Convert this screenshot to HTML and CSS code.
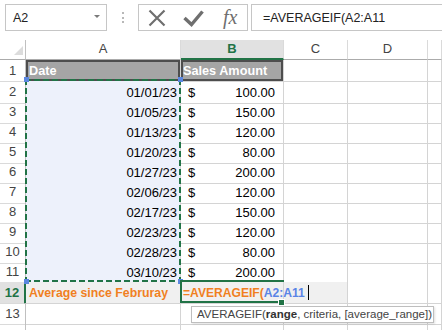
FILE: index.html
```html
<!DOCTYPE html>
<html lang="en">
<head>
    <meta charset="UTF-8">
    <title>AVERAGEIF</title>
    <link rel="stylesheet" href="styles.css">
</head>
<body>
    <div class="toolbar">
        <div class="name-box">
            <span>A2</span>
            <svg class="dropdown" width="6" height="4" viewBox="0 0 6 4"><polygon points="0,0 6,0 3,3" fill="#7a7a7a"/></svg>
        </div>
        <svg class="grip" width="3" height="12" viewBox="0 0 3 12">
            <rect x="0" y="0" width="2" height="2" fill="#b8b8b8"/>
            <rect x="0" y="5" width="2" height="2" fill="#b8b8b8"/>
            <rect x="0" y="9" width="2" height="2" fill="#b8b8b8"/>
        </svg>
        <div class="fx-buttons">
            <svg class="btn-cancel" width="18" height="25" viewBox="0 0 18 25">
                <path d="M1.5 5.5 L16.5 20.5 M16.5 5.5 L1.5 20.5" stroke="#6f6f6f" stroke-width="2.2" fill="none"/>
            </svg>
            <svg class="btn-enter" width="21" height="25" viewBox="0 0 21 25">
                <path d="M1.5 13 L8.5 19.5 L19.5 6.5" stroke="#6f6f6f" stroke-width="3.4" fill="none"/>
            </svg>
            <span class="fx">fx</span>
        </div>
        <div class="formula-bar">=AVERAGEIF(A2:A11</div>
    </div>

    <div class="sheet">
        <div class="row col-heads">
            <div class="corner"><svg width="9" height="9" viewBox="0 0 9 9"><polygon points="9,0 9,9 0,9" fill="#dcdcdc"/></svg></div>
            <div class="col-head">A</div>
            <div class="col-head active">B</div>
            <div class="col-head">C</div>
            <div class="col-head">D</div>
            <div class="col-head"></div>
        </div>
        <div class="row r1">
            <div class="row-head">1</div>
            <div class="cell title">Date</div>
            <div class="cell title">Sales Amount</div>
            <div class="cell"></div><div class="cell"></div><div class="cell"></div>
        </div>
        <div class="row">
            <div class="row-head">2</div>
            <div class="cell date">01/01/23</div>
            <div class="cell money"><span>$</span><span>100.00</span></div>
            <div class="cell"></div><div class="cell"></div><div class="cell"></div>
        </div>
        <div class="row">
            <div class="row-head">3</div>
            <div class="cell date">01/05/23</div>
            <div class="cell money"><span>$</span><span>150.00</span></div>
            <div class="cell"></div><div class="cell"></div><div class="cell"></div>
        </div>
        <div class="row">
            <div class="row-head">4</div>
            <div class="cell date">01/13/23</div>
            <div class="cell money"><span>$</span><span>120.00</span></div>
            <div class="cell"></div><div class="cell"></div><div class="cell"></div>
        </div>
        <div class="row">
            <div class="row-head">5</div>
            <div class="cell date">01/20/23</div>
            <div class="cell money"><span>$</span><span>80.00</span></div>
            <div class="cell"></div><div class="cell"></div><div class="cell"></div>
        </div>
        <div class="row">
            <div class="row-head">6</div>
            <div class="cell date">01/27/23</div>
            <div class="cell money"><span>$</span><span>200.00</span></div>
            <div class="cell"></div><div class="cell"></div><div class="cell"></div>
        </div>
        <div class="row">
            <div class="row-head">7</div>
            <div class="cell date">02/06/23</div>
            <div class="cell money"><span>$</span><span>120.00</span></div>
            <div class="cell"></div><div class="cell"></div><div class="cell"></div>
        </div>
        <div class="row">
            <div class="row-head">8</div>
            <div class="cell date">02/17/23</div>
            <div class="cell money"><span>$</span><span>150.00</span></div>
            <div class="cell"></div><div class="cell"></div><div class="cell"></div>
        </div>
        <div class="row">
            <div class="row-head">9</div>
            <div class="cell date">02/23/23</div>
            <div class="cell money"><span>$</span><span>120.00</span></div>
            <div class="cell"></div><div class="cell"></div><div class="cell"></div>
        </div>
        <div class="row">
            <div class="row-head">10</div>
            <div class="cell date">02/28/23</div>
            <div class="cell money"><span>$</span><span>80.00</span></div>
            <div class="cell"></div><div class="cell"></div><div class="cell"></div>
        </div>
        <div class="row r11">
            <div class="row-head">11</div>
            <div class="cell date">03/10/23</div>
            <div class="cell money"><span>$</span><span>200.00</span></div>
            <div class="cell"></div><div class="cell"></div><div class="cell"></div>
        </div>
        <div class="row r12">
            <div class="row-head active">12</div>
            <div class="cell label">Average since Februray</div>
            <div class="cell editing"><span class="fn">=AVERAGEIF(</span><span class="ref">A2:A11</span><span class="caret"></span></div>
            <div class="cell"></div><div class="cell blank"></div><div class="cell blank"></div>
        </div>
        <div class="row r13">
            <div class="row-head">13</div>
            <div class="cell"></div><div class="cell"></div><div class="cell"></div><div class="cell"></div><div class="cell"></div>
        </div>
        <div class="row">
            <div class="row-head">14</div>
            <div class="cell"></div><div class="cell"></div><div class="cell"></div><div class="cell"></div><div class="cell"></div>
        </div>

        <!-- reference range + active cell overlays -->
        <div class="range"></div>
        <div class="handle h-tl"></div>
        <div class="handle h-tr"></div>
        <div class="handle h-bl"></div>
        <div class="handle h-br"></div>
        <div class="active-cell"></div>
        <div class="fill-handle"></div>
        <div class="tooltip">AVERAGEIF(<b>range</b>, criteria, [average_range])</div>
    </div>
</body>
</html>
```

FILE: styles.css
```css
body {
    margin: 0;
    width: 442px;
    height: 330px;
    overflow: hidden;
    background: #ffffff;
    font-family: "Liberation Sans", Arial, sans-serif;
    color: #000000;
}

/* formula bar */
.toolbar {
    display: flex;
    align-items: flex-start;
    height: 40px;
    padding: 4px 0 0 5px;
    box-sizing: border-box;
}
.name-box {
    display: flex;
    align-items: center;
    justify-content: space-between;
    width: 102px;
    height: 27px;
    padding: 0 6px 0 7px;
    box-sizing: border-box;
    border: 1px solid #c6c6c6;
    font-size: 12.5px;
    color: #222222;
}
.name-box span {
    padding-top: 1px;
}
.dropdown {
    margin-bottom: 2px;
}
.grip {
    margin: 8px 0 0 15px;
}
.fx-buttons {
    display: flex;
    align-items: center;
    width: 110px;
    height: 27px;
    margin-left: 13px;
    box-sizing: border-box;
    border: 1px solid #c6c6c6;
}
.btn-cancel {
    margin-left: 9px;
}
.btn-enter {
    margin-left: 17px;
}
.fx {
    margin-left: 19px;
    font-family: "Liberation Serif", "Times New Roman", serif;
    font-style: italic;
    font-size: 20px;
    line-height: 25px;
    color: #6f6f6f;
}
.formula-bar {
    flex: 1;
    height: 27px;
    margin: 0 -10px 0 3px;
    padding: 1px 0 0 11px;
    box-sizing: border-box;
    border: 1px solid #c6c6c6;
    font-size: 12.5px;
    line-height: 24px;
    color: #222222;
}

/* grid */
.sheet {
    position: relative;
}
.row {
    display: grid;
    grid-template-columns: 26px 155px 103px 64px 80px 1fr;
    height: 20px;
}
.row > div {
    box-sizing: border-box;
    white-space: nowrap;
}
.col-heads {
    height: 20px;
}
.col-heads > div {
    border-right: 1px solid #dadada;
    border-bottom: 1px solid #ababab;
    text-align: center;
    font-size: 13px;
    line-height: 18px;
    color: #444444;
}
.corner {
    display: flex;
    align-items: flex-end;
    justify-content: flex-end;
    padding: 0 2px 4px 0;
}
.col-heads .corner {
    border-right-color: #c0c0c0;
}
.col-heads .active {
    background: #e1e1e1;
    border-bottom: 2px solid #217346;
    color: #217346;
    font-weight: bold;
}
.row-head {
    border-right: 1px solid #c0c0c0;
    border-bottom: 1px solid #dadada;
    text-align: center;
    font-size: 13px;
    line-height: 20px;
    padding-top: 1px;
    color: #444444;
}
.row-head.active {
    background: #e1e1e1;
    border-right: 2px solid #217346;
    color: #217346;
    font-weight: bold;
}
.cell {
    border-right: 1px solid #d4d4d4;
    border-bottom: 1px solid #d4d4d4;
    font-size: 13px;
    line-height: 20px;
    padding-top: 2px;
}
.r1 {
    height: 21px;
}
.r11, .r12, .r13 {
    height: 21px;
}
.title {
    background: #a5a5a5;
    box-shadow: inset 0 0 0 2px #4d4d4d;
    color: #ffffff;
    font-weight: bold;
    font-size: 12.7px;
    padding: 1px 0 0 3px;
}
.title + .title {
    padding-left: 2px;
}
.date {
    background: #edf1fb;
    text-align: right;
    padding-right: 3px;
}
.money {
    display: flex;
    justify-content: space-between;
    padding: 2px 8px 0 7px;
}
.r12 .cell {
    background: #f0f0f0;
}
.r12 .cell.blank {
    background: #ffffff;
}
.label {
    color: #f0801f;
    font-weight: bold;
    font-size: 12.3px;
    padding: 1px 0 0 3px;
}
.editing {
    position: relative;
    z-index: 1;
    font-weight: bold;
    font-size: 12.1px;
    padding: 1px 0 0 2px;
}
.fn {
    color: #f0801f;
}
.ref {
    color: #5b84e6;
}
.caret {
    display: inline-block;
    width: 1px;
    height: 15px;
    margin-left: 3px;
    vertical-align: -3px;
    background: #000000;
}

/* overlays */
.range {
    position: absolute;
    left: 25px;
    top: 39px;
    width: 156px;
    height: 203px;
    background:
        repeating-linear-gradient(90deg, #217346 0 6px, transparent 6px 9px) left top / 100% 2px no-repeat,
        repeating-linear-gradient(90deg, #217346 0 6px, transparent 6px 9px) left bottom / 100% 2px no-repeat,
        repeating-linear-gradient(180deg, #217346 0 6px, transparent 6px 9px) left top / 2px 100% no-repeat,
        repeating-linear-gradient(180deg, #217346 0 6px, transparent 6px 9px) right top / 2px 100% no-repeat;
}
.handle {
    position: absolute;
    width: 5px;
    height: 5px;
    background: #5b87e0;
}
.h-tl { left: 24px; top: 37px; }
.h-tr { left: 178px; top: 37px; }
.h-bl { left: 24px; top: 239px; }
.h-br { left: 178px; top: 239px; }
.active-cell {
    position: absolute;
    z-index: 2;
    left: 180px;
    top: 240px;
    width: 104px;
    height: 23px;
    box-sizing: border-box;
    border: 2px solid #217346;
    border-right: none;
}
.fill-handle {
    position: absolute;
    z-index: 3;
    left: 278px;
    top: 259px;
    width: 5px;
    height: 5px;
    border: 1px solid #ffffff;
    background: #217346;
}
.tooltip {
    position: absolute;
    z-index: 4;
    left: 191px;
    top: 266px;
    width: 243px;
    height: 17px;
    box-sizing: border-box;
    padding-left: 5px;
    border: 1px solid #bebebe;
    background: #ffffff;
    box-shadow: 1px 1px 2px rgba(0, 0, 0, 0.12);
    font-size: 11.5px;
    line-height: 15px;
    color: #444444;
    white-space: nowrap;
}
.tooltip b {
    color: #333333;
}
```
